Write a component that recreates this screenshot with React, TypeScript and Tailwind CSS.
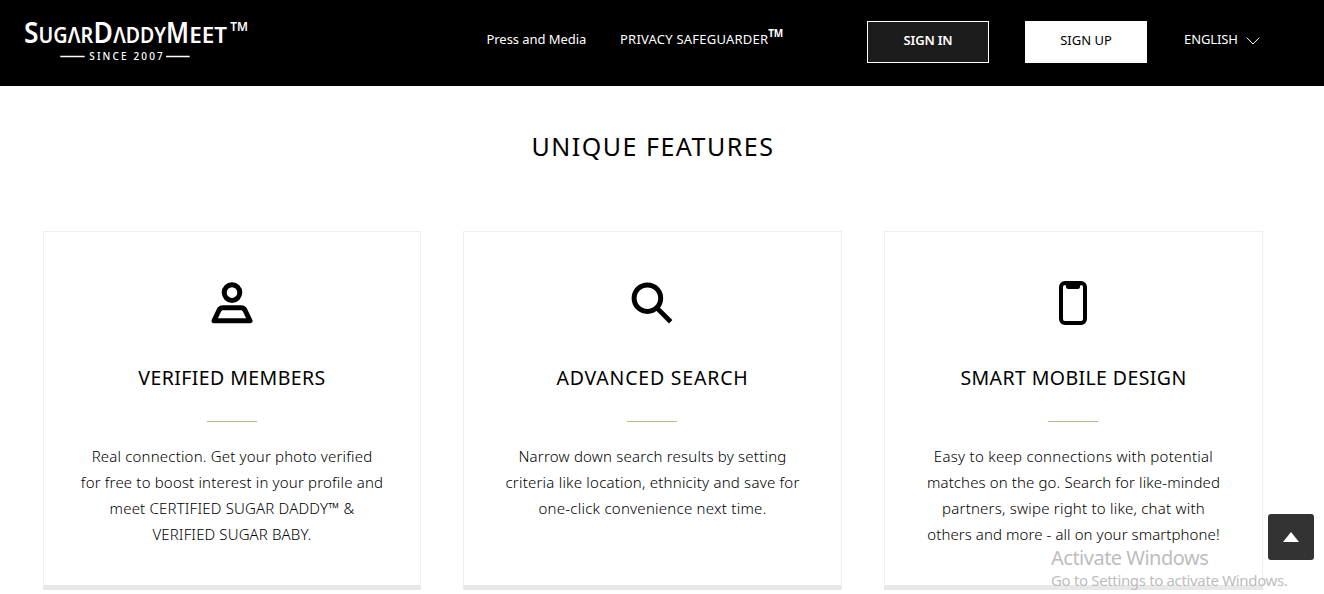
import type { ReactNode } from "react";

type Line = { text: string; tracking: string };
type Feature = { title: string; titleTracking: string; icon: ReactNode; lines: Line[] };

function Logo() {
  return (
    <svg
      className="block h-[76px] w-[230px] shrink-0"
      viewBox="20 6 230 76"
      fill="#fff"
      fontFamily="'Noto Sans', sans-serif"
      role="img"
      aria-label="SugarDaddyMeet"
    >
      <g fontSize="29.5" fontWeight="600">
        <text x="24" y="43.3" textLength="14.5" lengthAdjust="spacingAndGlyphs">S</text>
        <text x="93.6" y="43.3" textLength="19.4" lengthAdjust="spacingAndGlyphs">D</text>
        <text x="166.1" y="43.3" textLength="23" lengthAdjust="spacingAndGlyphs">M</text>
      </g>
      <g fontSize="21" fontWeight="600">
        <text x="38.6" y="43.3" textLength="54.6" lengthAdjust="spacingAndGlyphs">UGΛR</text>
        <text x="113.2" y="43.3" textLength="52.8" lengthAdjust="spacingAndGlyphs">ΛDDY</text>
        <text x="189.2" y="43.3" textLength="37.8" lengthAdjust="spacingAndGlyphs">EET</text>
      </g>
      <text x="230.3" y="30.6" fontSize="12" fontWeight="600" textLength="17.6" lengthAdjust="spacingAndGlyphs">TM</text>
      <text x="89.3" y="60.3" fontSize="10" fontWeight="500" textLength="73.5">SINCE 2007</text>
      <path d="M60.3 56.5H84.7M166 56.5H189.7" stroke="#fff" strokeWidth="1.5" />
    </svg>
  );
}

const iconClass = "mr-px block h-12 w-12";

const personIcon = (
  <svg className={iconClass} viewBox="0 0 48 48" fill="none" stroke="#000" strokeWidth="5" strokeLinejoin="round">
    <circle cx="24" cy="13.6" r="7.8" />
    <path d="M6 41.8L11 31.2Q12.3 28.8 14.7 28.8H33.3Q35.7 28.8 37 31.2L42 41.8Z" />
  </svg>
);

const searchIcon = (
  <svg className={iconClass} viewBox="0 0 48 48" fill="none" stroke="#000" strokeWidth="5">
    <circle cx="19.4" cy="19.2" r="13.3" />
    <path d="M28.3 28.4L42.7 42.7" strokeWidth="4.8" />
  </svg>
);

const phoneIcon = (
  <svg className={iconClass} viewBox="0 0 48 48">
    <rect x="12" y="4" width="24" height="40" rx="4" fill="none" stroke="#000" strokeWidth="4" />
    <path d="M15 3H33V6H32Q31 6 31 7.5Q31 10 28.5 10H19.5Q17 10 17 7.5Q17 6 16 6H15Z" />
  </svg>
);

const features: Feature[] = [
  {
    title: "VERIFIED MEMBERS",
    titleTracking: "tracking-[0.42px]",
    icon: personIcon,
    lines: [
      { text: "Real connection. Get your photo verified", tracking: "tracking-[0.18px]" },
      { text: "for free to boost interest in your profile and", tracking: "tracking-[0.17px]" },
      { text: "meet CERTIFIED SUGAR DADDY™ &", tracking: "tracking-[0.18px]" },
      { text: "VERIFIED SUGAR BABY.", tracking: "tracking-[0.12px]" },
    ],
  },
  {
    title: "ADVANCED SEARCH",
    titleTracking: "tracking-[0.8px]",
    icon: searchIcon,
    lines: [
      { text: "Narrow down search results by setting", tracking: "tracking-[0.21px]" },
      { text: "criteria like location, ethnicity and save for", tracking: "tracking-[0.22px]" },
      { text: "one-click convenience next time.", tracking: "tracking-[0.25px]" },
    ],
  },
  {
    title: "SMART MOBILE DESIGN",
    titleTracking: "tracking-[0.4px]",
    icon: phoneIcon,
    lines: [
      { text: "Easy to keep connections with potential", tracking: "tracking-[0.28px]" },
      { text: "matches on the go. Search for like-minded", tracking: "tracking-[0.12px]" },
      { text: "partners, swipe right to like, chat with", tracking: "tracking-[0.22px]" },
      { text: "others and more - all on your smartphone!", tracking: "tracking-[0.08px]" },
    ],
  },
];

function Header() {
  return (
    <header className="flex h-[86px] items-start bg-black pl-5 text-[13px] leading-5 text-white">
      <div className="pt-1.5">
        <Logo />
      </div>
      <nav className="ml-[236.5px] flex pt-[29px] whitespace-nowrap">
        <a className="w-[133.5px] tracking-[-0.06px]">Press and Media</a>
        <a className="flex w-[247px] tracking-[0.22px]">
          PRIVACY SAFEGUARDER
          <span className="-mt-1.5 text-[10px] font-bold tracking-[-0.2px]">TM</span>
        </a>
      </nav>
      <button className="mt-[21px] h-[42px] w-[122px] border border-white bg-[#1c1c1c] pb-1 font-semibold tracking-[-0.2px]">
        SIGN IN
      </button>
      <button className="mt-[21px] ml-9 h-[42px] w-[122px] bg-white pb-1 text-black">SIGN UP</button>
      <div className="ml-[37px] flex pt-[29px]">
        <span className="w-[62px] tracking-[-0.1px]">ENGLISH</span>
        <svg className="mt-2 h-2 w-[14px]" viewBox="0 0 14 8" fill="none" stroke="#fff" strokeWidth="1">
          <path d="M.7 .6L7 7L13.3 .6" />
        </svg>
      </div>
    </header>
  );
}

function FeatureCard({ feature }: { feature: Feature }) {
  return (
    <article className="flex h-[359px] flex-col items-center border border-b-[5px] border-[#eee] border-b-[#e8e8e8] pt-[47px] whitespace-nowrap text-black">
      {feature.icon}
      <h3 className={`mt-[37px] text-[19.5px] leading-7 ${feature.titleTracking}`}>{feature.title}</h3>
      <hr className="mt-[29px] mr-px w-[50px] border-t border-[#c5b08d]" />
      <p className="mt-[21px] text-center text-[15px] leading-[26px] font-light">
        {feature.lines.map((line) => (
          <span key={line.text} className={`block ${line.tracking}`}>
            {line.text}
          </span>
        ))}
      </p>
    </article>
  );
}

export default function App() {
  return (
    <div className="relative h-[594px] w-[1324px] overflow-hidden bg-white font-['Noto_Sans',sans-serif]">
      <Header />
      <main className="ml-[43px] w-[1220px] pt-[42px]">
        <h2 className="text-center text-[25px] leading-9 tracking-[1.5px] text-black">UNIQUE FEATURES</h2>
        <section className="mt-[67px] grid grid-cols-[378px_379px_379px] justify-between">
          {features.map((feature) => (
            <FeatureCard key={feature.title} feature={feature} />
          ))}
        </section>
      </main>

      <button
        className="absolute right-[10px] bottom-[34px] flex h-[46px] w-[46px] items-center justify-center rounded-[3px] bg-[#333]"
        aria-label="Back to top"
      >
        <svg className="h-[10px] w-4" viewBox="0 0 16 10" fill="#fff">
          <path d="M8 0L16 10H0Z" />
        </svg>
      </button>

      <div className="pointer-events-none absolute top-[545px] left-[1051px] whitespace-nowrap text-[#bdbdbd]">
        <p className="text-xl leading-[25px] tracking-[-0.5px]">Activate Windows</p>
        <p className="text-[15px] leading-5 tracking-[-0.34px]">Go to Settings to activate Windows.</p>
      </div>
    </div>
  );
}
